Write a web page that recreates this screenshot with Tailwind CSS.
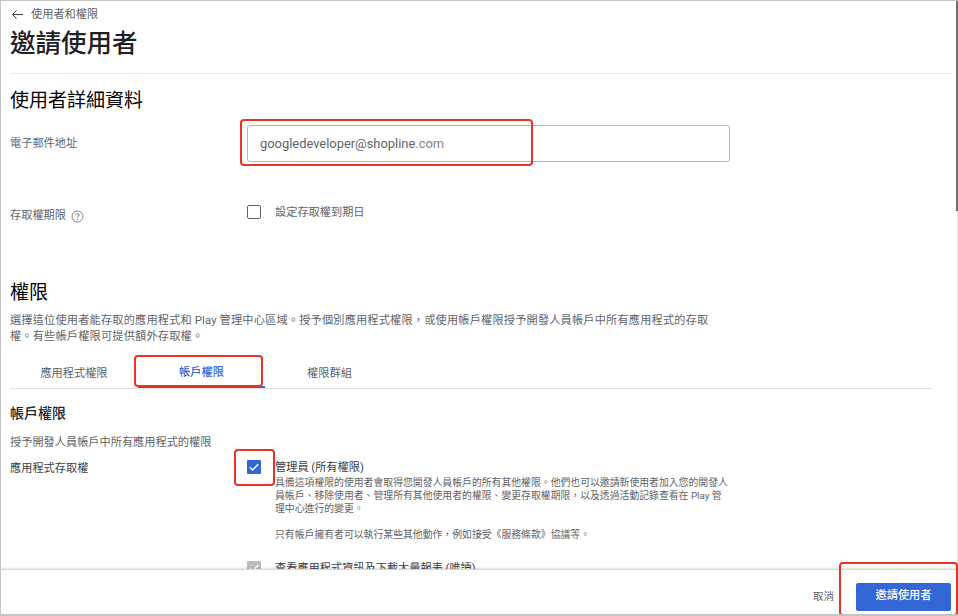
<!DOCTYPE html>
<html lang="zh-Hant">
<head>
  <meta charset="UTF-8" />
  <title>邀請使用者</title>
  <script src="https://cdn.jsdelivr.net/npm/@tailwindcss/browser@4"></script>
</head>
<body class="bg-white [font-family:Roboto,'Noto_Sans_CJK_TC',sans-serif] text-[11.2px] text-[#5f6368]">
  <div class="relative w-[958px] h-[616px] overflow-hidden flex flex-col border border-b-2 border-r-0 border-[#c4c4c4]">

    <!-- Scrolling content -->
    <main class="h-[568px] overflow-hidden pl-[9px] shrink-0">
      <div class="h-[27px] flex items-center gap-[7px] pt-[2px]">
        <svg class="w-[13px] h-[13px] ml-[1px] -mt-[2px] text-[#3c4043]" viewBox="0 0 13 13" fill="none" stroke="currentColor" stroke-width="1"><path d="M12 6.5H1.5M5.5 2.5l-4 4 4 4"/></svg>
        <span>使用者和權限</span>
      </div>
      <h1 class="h-[31px] leading-[31px] text-[25.5px] font-medium text-[#202124]">邀請使用者</h1>
      <div class="mt-[14px] w-[941px] border-t border-[#e8e8e8]"></div>

      <!-- Details -->
      <h2 class="mt-[15px] h-[24px] leading-[24px] text-[19px] text-black">使用者詳細資料</h2>
      <div class="mt-[12px] flex h-[37px]">
        <span class="w-[237px] pt-[11px]">電子郵件地址</span>
        <div class="w-[483px] h-[37px] border border-[#b4b4b4] rounded-[3px] flex items-center pl-[12px] text-[12.9px] text-[#5f6368]"><span>googledeveloper@shopline<span class="text-[#80868b]">.com</span></span></div>
      </div>
      <div class="mt-[42px] flex h-[20px]">
        <div class="w-[237px] flex items-center gap-[5px] h-[20px] mt-[2px]">
          <span>存取權期限</span>
          <svg class="w-[13px] h-[13px]" viewBox="0 0 13 13" fill="none" stroke="currentColor"><circle cx="6.5" cy="6.5" r="5.5" stroke-width="0.8"/><path d="M4.9 5.2c0-2 3.2-2 3.2-.1 0 1.200-1.600 1.300-1.600 2.500" stroke-width="0.9"/><path d="M6.5 8.800v1" stroke-width="1"/></svg>
        </div>
        <div class="flex gap-[14px] h-[14px] mt-[1px]">
          <div class="w-[14px] h-[14px] border-[1.5px] border-[#5f6368] rounded-[2px]"></div>
          <span class="leading-[16px]">設定存取權到期日</span>
        </div>
      </div>

      <!-- Permissions -->
      <h2 class="mt-[57px] h-[24px] leading-[24px] text-[19px] text-black">權限</h2>
      <p class="mt-[8px] w-[705px] leading-[16px] tracking-[0.18px]">選擇這位使用者能存取的應用程式和 Play 管理中心區域。授予個別應用程式權限，或使用帳戶權限授予開發人員帳戶中所有應用程式的存取權。有些帳戶權限可提供額外存取權。</p>
      <div class="mt-[11px] w-[921px] h-[33px] flex border-b border-[#e0e0e0]">
        <div class="w-[128px] flex items-center justify-center pt-[4px]">應用程式權限</div>
        <div class="w-[127px] h-[32px] flex items-center justify-center pt-[4px] text-[#3367d6] font-medium border-b-2 border-[#3367d6]">帳戶權限</div>
        <div class="w-[129px] flex items-center justify-center pt-[4px]">權限群組</div>
      </div>
      <h3 class="mt-[15px] h-[18px] leading-[18px] text-[14px] font-medium text-[#202124]">帳戶權限</h3>
      <p class="mt-[13px] h-[16px] leading-[16px]">授予開發人員帳戶中所有應用程式的權限</p>
      <div class="mt-[8px] flex">
        <span class="w-[237px] leading-[20px] text-[#3c4043]">應用程式存取權</span>
        <div class="w-[14px] h-[14px] mt-[1px] bg-[#3367d6] rounded-[1px] flex items-center justify-center">
          <svg class="w-[12px] h-[12px]" viewBox="0 0 12 12" fill="none" stroke="white" stroke-width="1.500"><path d="M1.800 6.300l2.800 2.700 5.600-5.800"/></svg>
        </div>
        <div class="ml-[14px] w-[454px]">
          <div class="h-[17px] leading-[18px] text-[#3c4043]">管理員 (所有權限)</div>
          <p class="text-[9.85px] leading-[13px]">具備這項權限的使用者會取得您開發人員帳戶的所有其他權限。他們也可以邀請新使用者加入您的開發人員帳戶、移除使用者、管理所有其他使用者的權限、變更存取權期限，以及透過活動記錄查看在 Play 管理中心進行的變更。</p>
          <p class="mt-[13px] text-[9.85px] leading-[13px]">只有帳戶擁有者可以執行某些其他動作，例如接受《服務條款》協議等。</p>
        </div>
      </div>
      <div class="mt-[20px] flex pl-[237px]">
        <div class="w-[14px] h-[14px] bg-[#bdbdbd] rounded-[1px] flex items-center justify-center">
          <svg class="w-[12px] h-[12px]" viewBox="0 0 12 12" fill="none" stroke="white" stroke-width="1.500"><path d="M1.800 6.300l2.800 2.700 5.600-5.800"/></svg>
        </div>
        <span class="ml-[14px] mt-[1px] leading-[14px] text-[#3c4043]">查看應用程式資訊及下載大量報表 (唯讀)</span>
      </div>
    </main>

    <!-- Footer -->
    <footer class="relative flex-1 border-t border-[#d8d8d8] shadow-[0_-1px_2px_rgba(0,0,0,0.12)] bg-white flex items-center justify-end pr-[7px] gap-[22px]">
      <span class="text-[10.5px] mt-[9px]">取消</span>
      <button class="w-[95px] h-[28px] mt-[9px] bg-[#3367d6] text-white font-medium rounded-[2px]">邀請使用者</button>
    </footer>

    <!-- Scrollbar -->
    <div class="absolute top-0 right-0 w-[2px] h-[210px] bg-[#6b6f73]"></div>
    <div class="absolute top-[210px] right-0 w-[1px] h-[359px] bg-[#e0e0e0]"></div>

    <!-- Red annotation boxes -->
    <div class="absolute left-[239px] top-[118px] w-[293px] h-[47px] border-2 border-[#ea3323] rounded-[4px]"></div>
    <div class="absolute left-[133px] top-[354px] w-[129px] h-[32px] border-2 border-[#ea3323] rounded-[4px]"></div>
    <div class="absolute left-[233px] top-[448px] w-[41px] h-[37px] border-2 border-[#ea3323] rounded-[4px]"></div>
    <div class="absolute left-[838px] top-[561px] w-[119px] h-[54px] border-2 border-[#ea3323] rounded-[4px]"></div>
  </div>
</body>
</html>
